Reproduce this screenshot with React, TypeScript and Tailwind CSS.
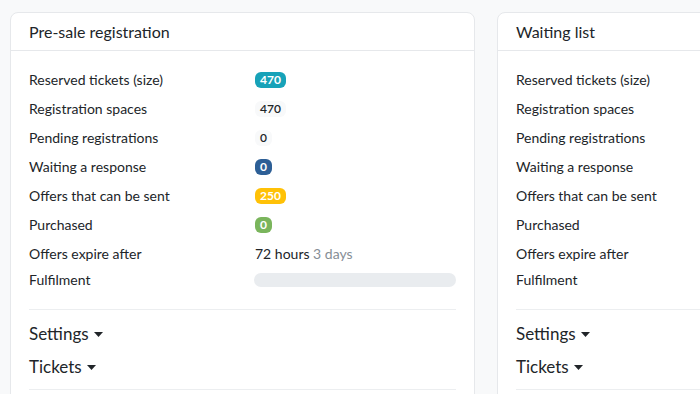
import React from 'react';

type Badge = { value: string; tone: 'teal' | 'light' | 'blue' | 'yellow' | 'green' };

const toneClass: Record<Badge['tone'], string> = {
  teal: 'bg-[#17a2b8] text-white font-bold',
  light: 'bg-[#f8f9fa] text-[#212529] font-semibold',
  blue: 'bg-[#2d5f96] text-white font-bold',
  yellow: 'bg-[#ffc107] text-white font-bold',
  green: 'bg-[#7ab55c] text-white font-bold'
};

const rows: { label: string; badge: Badge }[] = [
  { label: 'Reserved tickets (size)', badge: { value: '470', tone: 'teal' } },
  { label: 'Registration spaces', badge: { value: '470', tone: 'light' } },
  { label: 'Pending registrations', badge: { value: '0', tone: 'light' } },
  { label: 'Waiting a response', badge: { value: '0', tone: 'blue' } },
  { label: 'Offers that can be sent', badge: { value: '250', tone: 'yellow' } },
  { label: 'Purchased', badge: { value: '0', tone: 'green' } }
];

const Caret = () => (
  <svg width="9" height="5" viewBox="0 0 9 5" className="ml-[5px] mt-[1px]">
    <path d="M0 0h9L4.5 5z" fill="#212529" />
  </svg>
);

const Card = ({ title }: { title: string }) => (
  <div className="w-[465px] shrink-0 rounded-lg border border-[#e6e8eb] bg-white">
    <div className="flex h-[38px] items-center border-b border-[#e6e8eb] px-[18px] text-[16px] text-[#212529]">
      {title}
    </div>
    <div className="px-[18px] pt-[14px]">
      {rows.map((row) => (
        <div key={row.label} className="flex h-[29px] items-center">
          <div className="w-[226px] text-[14px] text-[#212529]">{row.label}</div>
          <span
            className={`inline-flex h-[16px] items-center rounded-[6px] px-[5px] text-[12px] leading-none ${toneClass[row.badge.tone]}`}
          >
            {row.badge.value}
          </span>
        </div>
      ))}
      <div className="flex h-[29px] items-center">
        <div className="w-[226px] text-[14px] text-[#212529]">Offers expire after</div>
        <div className="text-[14px] text-[#212529]">
          72 hours <span className="text-[#868e96]">3 days</span>
        </div>
      </div>
      <div className="flex h-[23px] items-center">
        <div className="w-[226px] text-[14px] text-[#212529]">Fulfilment</div>
        <div className="h-[14px] w-[203px] rounded-full bg-[#e9ecef]" />
      </div>
      <div className="mt-[18px] border-t border-[#eceef0]" />
      <div className="mt-[12px] flex h-[24px] items-center text-[17px] text-[#212529]">
        Settings
        <Caret />
      </div>
      <div className="mt-[9px] flex h-[24px] items-center text-[17px] text-[#212529]">
        Tickets
        <Caret />
      </div>
      <div className="mt-[10px] border-t border-[#eceef0]" />
      <div className="h-[40px]" />
    </div>
  </div>
);

export default function App() {
  return (
    <div
      className="flex h-[394px] w-[700px] items-start gap-[22px] overflow-hidden bg-[#f8f9fa] pl-[10px] pt-[12px]"
      style={{ fontFamily: 'Lato, "Noto Sans", sans-serif' }}
    >
      <Card title="Pre-sale registration" />
      <Card title="Waiting list" />
    </div>
  );
}
